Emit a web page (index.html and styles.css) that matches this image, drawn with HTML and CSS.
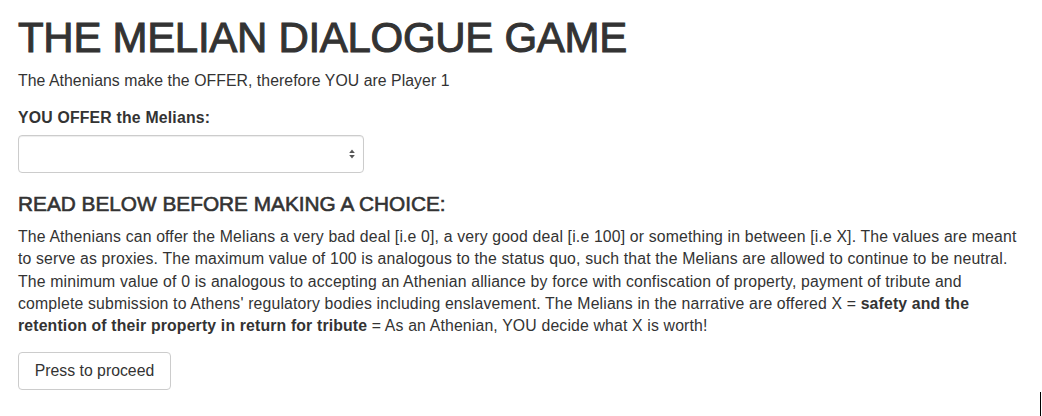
FILE: index.html
```html
<!DOCTYPE html>
<html lang="en">
<head>
<meta charset="utf-8">
<title>The Melian Dialogue Game</title>
<link rel="stylesheet" href="styles.css">
</head>
<body>
<div class="page">
  <h1 class="title">THE MELIAN DIALOGUE GAME</h1>
  <p class="lead-line">The Athenians make the OFFER, therefore YOU are Player 1</p>
  <div class="form-group">
    <label class="field-label" for="offer">YOU OFFER the Melians:</label>
    <div class="select-wrap">
      <select id="offer" class="form-control"></select>
      <svg class="select-arrows" width="8" height="12" viewBox="0 0 8 12" aria-hidden="true">
        <path d="M1.2 5 L4 1.6 L6.8 5 Z" fill="#555"/>
        <path d="M1.2 7 L4 10.4 L6.8 7 Z" fill="#555"/>
      </svg>
    </div>
  </div>
  <h3 class="section-title">READ BELOW BEFORE MAKING A CHOICE:</h3>
  <p class="body-text">The Athenians can offer the Melians a very bad deal [i.e 0], a very good deal [i.e 100] or something in between [i.e X]. The values are meant<br>to serve as proxies. The maximum value of 100 is analogous to the status quo, such that the Melians are allowed to continue to be neutral.<br>The minimum value of 0 is analogous to accepting an Athenian alliance by force with confiscation of property, payment of tribute and<br>complete submission to Athens' regulatory bodies including enslavement. The Melians in the narrative are offered X = <b>safety and the<br>retention of their property in return for tribute</b> = As an Athenian, YOU decide what X is worth!</p>
  <button class="btn" type="button">Press to proceed</button>
</div>
<div class="caret"></div>
</body>
</html>
```

FILE: styles.css
```css
html, body {
  margin: 0;
  padding: 0;
  background: #fff;
}
body {
  font-family: "Liberation Sans", Arial, Helvetica, sans-serif;
  font-size: 15.8px;
  line-height: 22.3px;
  letter-spacing: 0.06px;
  color: #333;
  width: 1042px;
  height: 416px;
  overflow: hidden;
  position: relative;
}
.page {
  padding: 0 18px;
  display: flex;
  flex-direction: column;
  align-items: flex-start;
}
.title {
  font-size: 42px;
  line-height: 48px;
  font-weight: 400;
  -webkit-text-stroke: 1px #333;
  margin: 14px 0 8px;
  color: #333;
  letter-spacing: -0.3px;
}
.lead-line {
  margin: 0 0 15px;
  line-height: 22px;
}
.form-group {
  display: flex;
  flex-direction: column;
  align-items: flex-start;
}
.field-label {
  font-weight: 700;
  line-height: 22px;
  margin-bottom: 6px;
  letter-spacing: 0.2px;
}
.select-wrap {
  position: relative;
  width: 346px;
  height: 38px;
}
.form-control {
  width: 346px;
  height: 38px;
  box-sizing: border-box;
  border: 1px solid #ccc;
  border-radius: 4px;
  background: #fff;
  box-shadow: inset 0 1px 1px rgba(0,0,0,.075);
  -webkit-appearance: none;
  appearance: none;
  padding: 6px 13px;
  font: inherit;
  color: #555;
  margin: 0;
}
.select-arrows {
  position: absolute;
  right: 8px;
  top: 13px;
  pointer-events: none;
}
.section-title {
  font-size: 20.8px;
  line-height: 23px;
  font-weight: 400;
  -webkit-text-stroke: 0.6px #333;
  letter-spacing: 0;
  margin: 19px 0 11px;
}
.body-text {
  margin: 0 0 15px;
  width: 1010px;
  letter-spacing: 0.16px;
}
.body-text b {
  font-weight: 700;
}
.btn {
  font: inherit;
  color: #333;
  background: #fff;
  border: 1px solid #ccc;
  border-radius: 4px;
  height: 38px;
  width: 153px;
  padding: 0 13px;
  box-sizing: border-box;
  line-height: 22px;
}
.caret {
  position: absolute;
  left: 1040px;
  top: 392px;
  width: 1px;
  height: 24px;
  background: #000;
}
```
